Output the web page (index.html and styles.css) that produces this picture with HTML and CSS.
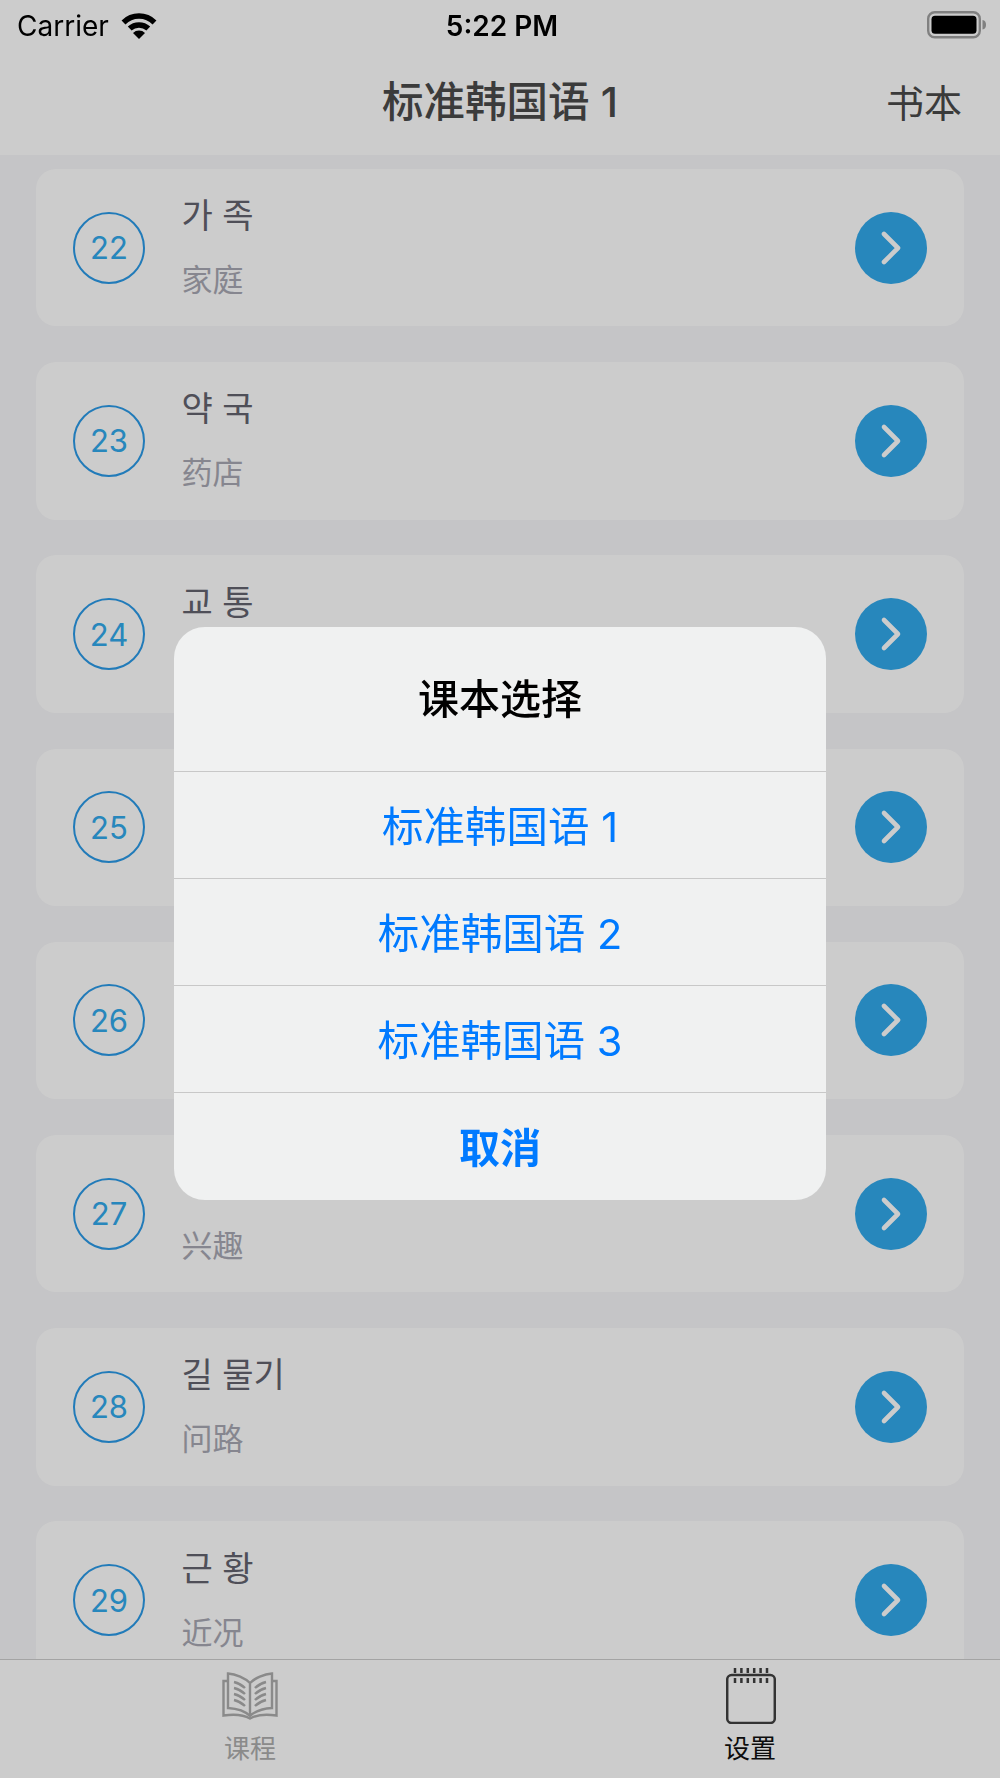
FILE: index.html
```html
<!DOCTYPE html>
<html lang="zh-CN">
<head>
    <meta charset="UTF-8">
    <meta name="viewport" content="width=device-width, initial-scale=1.0">
    <title>标准韩国语 1</title>
    <link rel="stylesheet" href="styles.css">
</head>
<body>
    <div class="app">
        <header class="top">
            <nav class="nav">
                <h1>标准韩国语 1</h1>
                <a class="nav-action">书本</a>
            </nav>
        </header>

        <main class="lessons">
            <div class="lesson">
                <div class="num">22</div>
                <div class="lesson-text"><div class="ko" lang="ko">가 족</div><div class="zh">家庭</div></div>
                <div class="go"><svg width="30" height="36" viewBox="0 0 30 36"><path d="M8 4L22 18L8 32"/></svg></div>
            </div>
            <div class="lesson">
                <div class="num">23</div>
                <div class="lesson-text"><div class="ko" lang="ko">약 국</div><div class="zh">药店</div></div>
                <div class="go"><svg width="30" height="36" viewBox="0 0 30 36"><path d="M8 4L22 18L8 32"/></svg></div>
            </div>
            <div class="lesson">
                <div class="num">24</div>
                <div class="lesson-text"><div class="ko" lang="ko">교 통</div><div class="zh"></div></div>
                <div class="go"><svg width="30" height="36" viewBox="0 0 30 36"><path d="M8 4L22 18L8 32"/></svg></div>
            </div>
            <div class="lesson">
                <div class="num">25</div>
                <div class="lesson-text"><div class="ko"></div><div class="zh"></div></div>
                <div class="go"><svg width="30" height="36" viewBox="0 0 30 36"><path d="M8 4L22 18L8 32"/></svg></div>
            </div>
            <div class="lesson">
                <div class="num">26</div>
                <div class="lesson-text"><div class="ko"></div><div class="zh"></div></div>
                <div class="go"><svg width="30" height="36" viewBox="0 0 30 36"><path d="M8 4L22 18L8 32"/></svg></div>
            </div>
            <div class="lesson">
                <div class="num">27</div>
                <div class="lesson-text"><div class="ko"></div><div class="zh">兴趣</div></div>
                <div class="go"><svg width="30" height="36" viewBox="0 0 30 36"><path d="M8 4L22 18L8 32"/></svg></div>
            </div>
            <div class="lesson">
                <div class="num">28</div>
                <div class="lesson-text"><div class="ko" lang="ko">길 물기</div><div class="zh">问路</div></div>
                <div class="go"><svg width="30" height="36" viewBox="0 0 30 36"><path d="M8 4L22 18L8 32"/></svg></div>
            </div>
            <div class="lesson">
                <div class="num">29</div>
                <div class="lesson-text"><div class="ko" lang="ko">근 황</div><div class="zh">近况</div></div>
                <div class="go"><svg width="30" height="36" viewBox="0 0 30 36"><path d="M8 4L22 18L8 32"/></svg></div>
            </div>
        </main>

        <footer class="tabs">
            <div class="tab">
                <svg class="tab-icon" width="56" height="48" viewBox="0 0 56 48" fill="none" stroke="#adadad" stroke-width="2.4">
                    <path d="M28 11C23 6 14 2 6 1.500V36C14 36.500 23 39 28 44C33 39 42 36.500 50 36V1.500C42 2 33 6 28 11V44"/>
                    <path d="M6 9H1.500V43.500C12 42 22 43 28 46.500C34 43 44 42 54.500 43.500V9H50"/>
                    <path d="M12 10C16 11 20 13 23 16M12 16C16 17 20 19 23 22M12 22C16 23 20 25 23 28M12 28C16 29 20 31 23 34M44 10C40 11 36 13 33 16M44 16C40 17 36 19 33 22M44 22C40 23 36 25 33 28M44 28C40 29 36 31 33 34"/>
                </svg>
                <span class="tab-label">课程</span>
            </div>
            <div class="tab active">
                <svg class="tab-icon" width="50" height="56" viewBox="0 0 50 56" fill="none" stroke="#404040" stroke-width="2.5">
                    <rect x="1.200" y="7" width="47.600" height="48" rx="4.500"/>
                    <path stroke-dasharray="5 5" d="M9 0V15M15.400 0V15M21.800 0V15M28.200 0V15M34.600 0V15M41 0V15"/>
                </svg>
                <span class="tab-label">设置</span>
            </div>
        </footer>
    </div>

    <div class="backdrop"></div>

    <div class="status">
        <div class="status-left">
            <span>Carrier</span>
            <svg class="wifi" width="36" height="26" viewBox="0 0 36 26">
                <path d="M2.500 9.500A22 22 0 0 1 33.500 9.500" fill="none" stroke="#000" stroke-width="5.500"/>
                <path d="M8.700 15.600A13.500 13.500 0 0 1 27.300 15.600" fill="none" stroke="#000" stroke-width="5.500"/>
                <path d="M18 26L12 20A8.500 8.500 0 0 1 24 20Z" fill="#000"/>
            </svg>
        </div>
        <div class="status-time">5:22 PM</div>
        <div class="status-right">
            <svg width="60" height="28" viewBox="0 0 60 28">
                <rect x="1.200" y="1.200" width="51.600" height="25" rx="6.500" fill="none" stroke="#808080" stroke-width="2.400"/>
                <rect x="4.500" y="4.700" width="45" height="18" rx="3.500" fill="#000"/>
                <path d="M55.500 9C58 9.500 59 11 59 13.700C59 16.400 58 18 55.500 18.500Z" fill="#808080"/>
            </svg>
        </div>
    </div>

    <div class="alert-wrap">
        <div class="alert">
            <div class="alert-title">课本选择</div>
            <button class="alert-btn">标准韩国语 1</button>
            <button class="alert-btn">标准韩国语 2</button>
            <button class="alert-btn">标准韩国语 3</button>
            <button class="alert-btn cancel">取消</button>
        </div>
    </div>
</body>
</html>
```
FILE: styles.css
```css
* {
    box-sizing: border-box;
}
body {
    margin: 0;
    font-family: Inter, "Noto Sans CJK SC", sans-serif;
    background: #f7f7f9;
    overflow: hidden;
}
.app {
    height: 1778px;
    display: flex;
    flex-direction: column;
}

/* top bar */
.top {
    height: 155px;
    padding-top: 46px;
    background: #fff;
}
.nav {
    height: 106px;
    padding-right: 38px;
    display: flex;
    align-items: center;
    justify-content: flex-end;
    position: relative;
    color: #4a4a4a;
}
.nav h1 {
    position: absolute;
    left: 0;
    right: 0;
    margin: 0;
    text-align: center;
    font-size: 41.5px;
    font-weight: 500;
}
.nav-action {
    font-size: 38px;
    position: relative;
    top: 1px;
}

/* status bar stays above the dimming */
.status {
    position: fixed;
    top: 0;
    left: 0;
    right: 0;
    height: 49px;
    padding: 2px 13px 0 17px;
    display: grid;
    grid-template-columns: 1fr auto 1fr;
    align-items: center;
    font-size: 28px;
    color: #000;
}
.status-left {
    display: flex;
    align-items: center;
    gap: 12px;
}
.status-time {
    font-weight: 600;
}
.status-right {
    display: flex;
    justify-content: flex-end;
    margin-top: -2px;
}

/* lesson list */
.lessons {
    flex: 1;
    overflow: hidden;
    padding: 14px 36px 0;
    display: flex;
    flex-direction: column;
    gap: 35.8px;
}
.lesson {
    flex: none;
    height: 157.4px;
    background: #fff;
    border-radius: 20px;
    padding: 0 37px;
    display: flex;
    align-items: center;
}
.num {
    width: 72px;
    height: 72px;
    border: 2.8px solid #2a9ae8;
    border-radius: 50%;
    color: #31a9ec;
    font-size: 31px;
    display: flex;
    align-items: center;
    justify-content: center;
}
.lesson-text {
    flex: 1;
    margin-left: 36.5px;
}
.ko {
    height: 50px;
    line-height: 50px;
    font-size: 34px;
    color: #63636f;
    margin: -4px 0 19px;
}
.zh {
    height: 40px;
    line-height: 40px;
    font-size: 31px;
    color: #a8a8b3;
}
.go {
    width: 72px;
    height: 72px;
    border-radius: 50%;
    background: #31a9ec;
    display: flex;
    align-items: center;
    justify-content: center;
}
.go svg {
    fill: none;
    stroke: #fff;
    stroke-width: 4.6;
    stroke-linecap: round;
    stroke-linejoin: round;
}

/* tab bar */
.tabs {
    height: 119px;
    background: #fff;
    border-top: 1.5px solid #cecece;
    display: grid;
    grid-template-columns: 1fr 1fr;
}
.tab {
    position: relative;
    display: flex;
    flex-direction: column;
    align-items: center;
    color: #adadad;
    padding-top: 12px;
}
.tab .tab-icon {
    margin-left: -1px;
}
.tab.active {
    color: #111;
    padding-top: 8px;
}
.tab.active .tab-icon {
    margin-left: 1px;
}
.tab-label {
    position: absolute;
    top: 71px;
    font-size: 26px;
    line-height: 36px;
}

/* dimmed overlay and alert */
.backdrop {
    position: fixed;
    inset: 0;
    background: rgba(0, 0, 0, 0.2);
}
.alert-wrap {
    position: fixed;
    inset: 0;
    padding-top: 48px;
    display: flex;
    align-items: center;
    justify-content: center;
}
.alert {
    width: 652px;
    height: 573px;
    background: #f0f1f1;
    border-radius: 31px;
    overflow: hidden;
    display: flex;
    flex-direction: column;
}
.alert-title {
    height: 144.5px;
    padding-bottom: 6px;
    display: flex;
    align-items: center;
    justify-content: center;
    font-size: 41px;
    font-weight: 500;
    color: #000;
}
.alert-btn {
    flex: 1;
    border: none;
    border-top: 1.5px solid #c8c8c8;
    background: none;
    padding: 0 0 2px;
    font-family: inherit;
    font-size: 41.5px;
    color: #007aff;
}
.alert-btn.cancel {
    font-size: 41px;
    font-weight: 600;
}
```
